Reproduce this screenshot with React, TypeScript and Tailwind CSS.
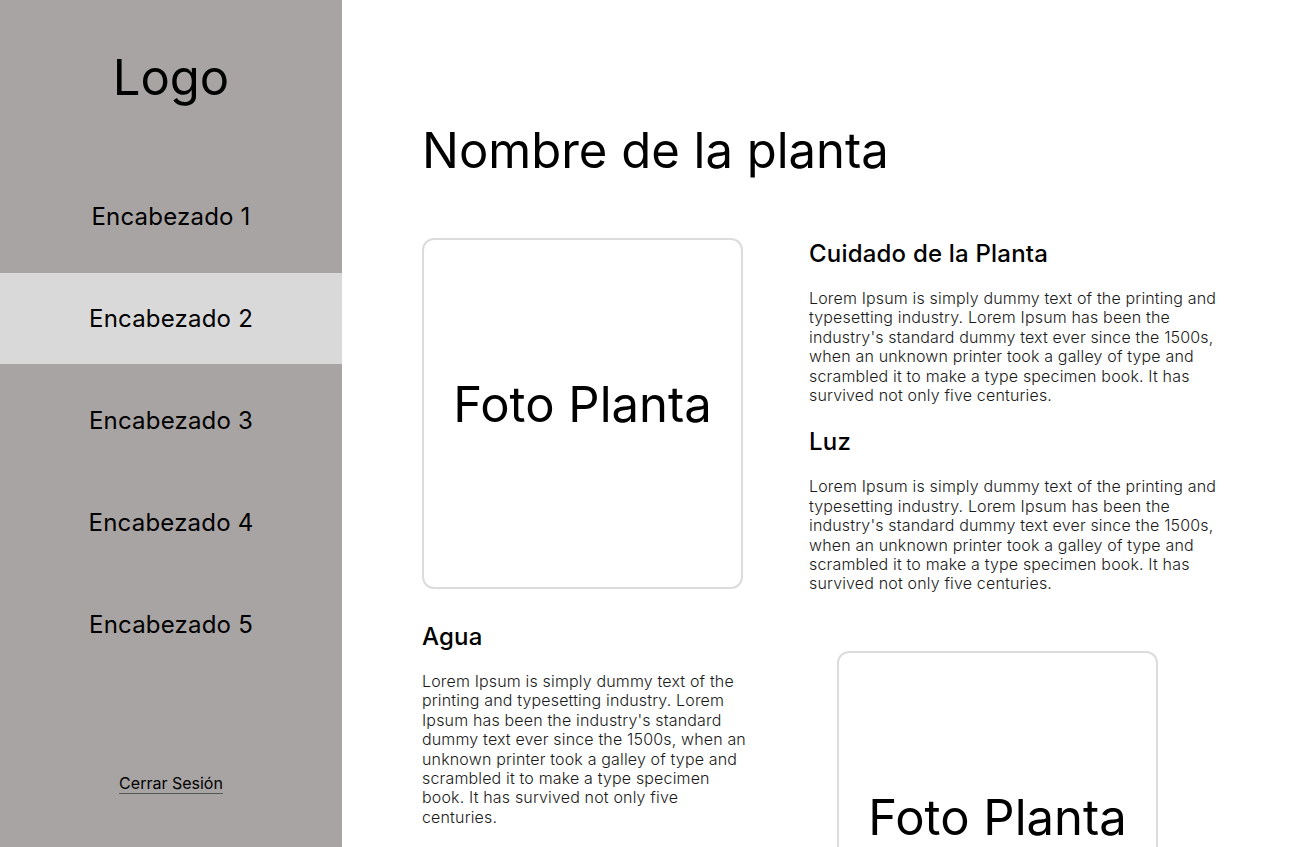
import React from "react";

const lorem =
  "Lorem Ipsum is simply dummy text of the printing and typesetting industry. Lorem Ipsum has been the industry's standard dummy text ever since the 1500s, when an unknown printer took a galley of type and scrambled it to make a type specimen book. It has survived not only five centuries.";

const navItems = ["Encabezado 1", "Encabezado 2", "Encabezado 3", "Encabezado 4", "Encabezado 5"];

function Sidebar() {
  return (
    <aside className="flex h-full w-[342px] shrink-0 flex-col bg-[#a8a4a3] text-black">
      <div className="pt-[48px] text-center text-[49px] leading-[60px]">Logo</div>
      <nav className="mt-[63px] flex flex-col gap-[11px]">
        {navItems.map((item, i) => (
          <a
            key={item}
            href="#"
            className={
              i === 1
                ? "flex h-[91px] items-center justify-center bg-[#d9d9d9] text-[24px] tracking-[0.2px]"
                : "flex h-[91px] items-center justify-center text-[24px] tracking-[0.2px]"
            }
          >
            {item}
          </a>
        ))}
      </nav>
      <div className="mt-auto pb-[52px] text-center">
        <a href="#" className="text-[16px] underline decoration-[#555] underline-offset-[4px]">
          Cerrar Sesión
        </a>
      </div>
    </aside>
  );
}

function PhotoBox() {
  return (
    <div className="flex h-[351px] w-[321px] items-center justify-center rounded-[12px] border-2 border-[#dcdcdc] bg-white pb-[17px] text-[49px]">
      Foto Planta
    </div>
  );
}

function Section({ title, width }: { title: string; width: string }) {
  return (
    <div className={width}>
      <h3 className="text-[24px] font-medium leading-[29px] tracking-[0.2px]">{title}</h3>
      <p className="mt-[21px] text-[16px] font-light leading-[19.4px] tracking-[0.16px] text-[#1a1a1a]">
        {lorem}
      </p>
    </div>
  );
}

export default function App() {
  return (
    <div
      className="flex h-[847px] overflow-hidden bg-white"
      style={{ fontFamily: "Inter, 'Noto Sans', sans-serif" }}
    >
      <Sidebar />
      <main className="flex-1 overflow-hidden pl-[80px] pt-[118px]">
        <h1 className="text-[49px] leading-[66px]">Nombre de la planta</h1>
        <div className="mt-[54px] flex gap-[66px]">
          <PhotoBox />
          <div className="flex flex-col gap-[22px] pt-[1px]">
            <Section title="Cuidado de la Planta" width="w-[416px]" />
            <Section title="Luz" width="w-[416px]" />
          </div>
        </div>
        <div className="mt-[28px] flex">
          <Section title="Agua" width="w-[328px]" />
          <div className="ml-[87px] mt-[29px]">
            <PhotoBox />
          </div>
        </div>
      </main>
    </div>
  );
}
